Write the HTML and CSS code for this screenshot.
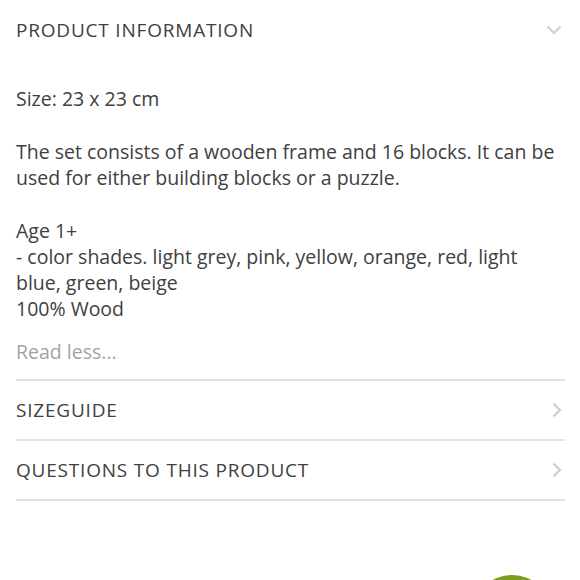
FILE: index.html
```html
<!DOCTYPE html>
<html>
<head>
<meta charset="utf-8">
<link rel="stylesheet" href="styles.css">
</head>
<body>
<div class="page">
  <section class="acc open">
    <div class="acc-head">
      <span class="acc-title">PRODUCT INFORMATION</span>
      <svg class="chev" width="16" height="10" viewBox="0 0 16 10"><path d="M1.5 1.5 L8 8 L14.5 1.5" fill="none" stroke="#cfcfcf" stroke-width="2.2"/></svg>
    </div>
    <div class="acc-body">
      <p>Size: 23 x 23 cm</p>
      <p>The set consists of a wooden frame and 16 blocks. It can be used for either building blocks or a puzzle.</p>
      <p>Age 1+<br>- color shades. light grey, pink, yellow, orange, red, light blue, green, beige<br>100% Wood</p>
      <a class="less">Read less...</a>
    </div>
  </section>
  <section class="acc row">
    <div class="acc-head">
      <span class="acc-title">SIZEGUIDE</span>
      <svg class="chev" width="10" height="16" viewBox="0 0 10 16"><path d="M1.5 1.5 L8 8 L1.5 14.5" fill="none" stroke="#cfcfcf" stroke-width="2.2"/></svg>
    </div>
  </section>
  <section class="acc row">
    <div class="acc-head">
      <span class="acc-title">QUESTIONS TO THIS PRODUCT</span>
      <svg class="chev" width="10" height="16" viewBox="0 0 10 16"><path d="M1.5 1.5 L8 8 L1.5 14.5" fill="none" stroke="#cfcfcf" stroke-width="2.2"/></svg>
    </div>
  </section>
  <div class="fab"></div>
</div>
</body>
</html>
```
FILE: styles.css
```css
html, body { margin: 0; padding: 0; background: #fff; }
body { font-family: "Open Sans", "Noto Sans", sans-serif; color: #404040; overflow: hidden; }
.page { padding: 0 15px 0 16px; height: 580px; position: relative; box-sizing: border-box; overflow: hidden; }
.acc-head { display: flex; justify-content: space-between; align-items: center; }
.open .acc-head { height: 60px; }
.acc-title { font-size: 19px; line-height: 26px; letter-spacing: 0.8px; color: #404040; }
.chev { margin-right: 3px; }
.acc-body { padding-top: 26px; padding-bottom: 14px; border-bottom: 2px solid #e3e3e3; }
.acc-body p { margin: 0 0 27px; font-size: 19.5px; line-height: 26px; }
.acc-body p:last-of-type { margin-bottom: 17px; }
.less { display: block; color: #a3a3a3; font-size: 19.5px; line-height: 26px; }
.row .acc-head { height: 58px; border-bottom: 2px solid #e3e3e3; }
.fab { position: absolute; left: 472px; top: 575px; width: 80px; height: 80px; border-radius: 50%; background: #7d9c1c; }
```
